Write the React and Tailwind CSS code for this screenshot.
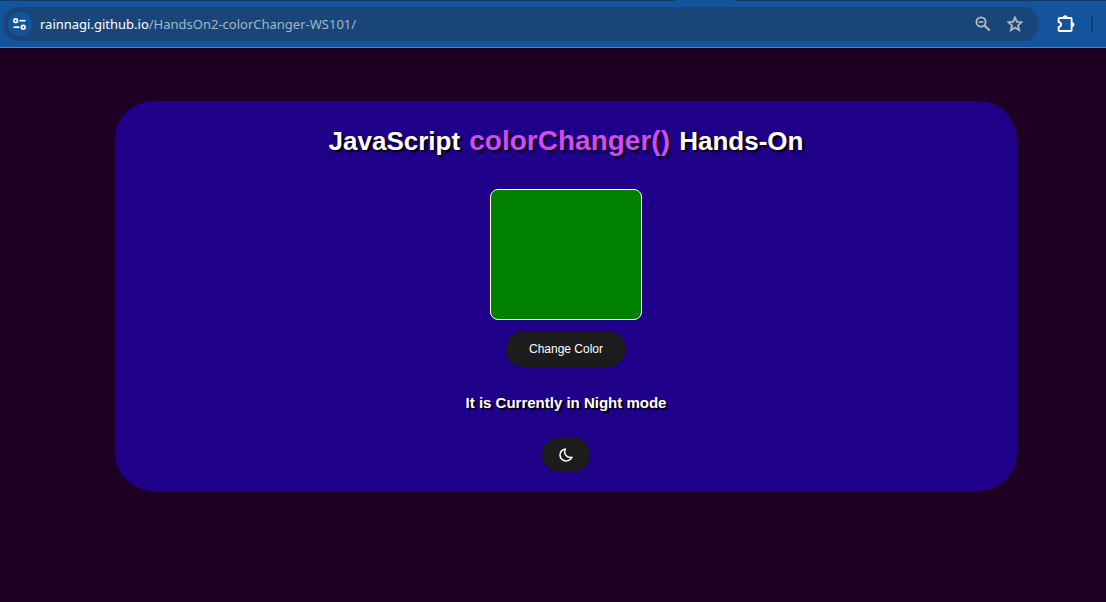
import { useState } from "react";

function TuneIcon() {
  return (
    <svg width="14" height="12" viewBox="0 0 14 12" fill="none" stroke="#fff" strokeWidth="1.7" aria-hidden="true">
      <circle cx="2.7" cy="2.7" r="1.8" />
      <path d="M6.5 2.7H12.5" />
      <circle cx="10.2" cy="9.2" r="1.8" />
      <path d="M0.5 9.2H6.5" />
    </svg>
  );
}

function ZoomOutIcon() {
  return (
    <svg width="16" height="16" viewBox="0 0 16 16" fill="none" stroke="#b5bcc4" strokeWidth="1.8" aria-hidden="true">
      <circle cx="6" cy="6" r="4.6" />
      <path d="M9.4 9.4L14.6 14.6" strokeWidth="2.1" />
      <path d="M3.8 6H8.2" strokeWidth="1.6" />
    </svg>
  );
}

function StarIcon() {
  return (
    <svg width="20" height="20" viewBox="0 0 24 24" fill="#b5bcc4" stroke="#b5bcc4" strokeWidth="0.6" aria-hidden="true">
      <path d="M21.5 9.24l-6.69-.62L12 2.2 9.19 8.63 2.5 9.24l4.96 4.73L5.82 21 12 17.27 18.18 21l-1.63-7.03L21.5 9.24zM12 15.4l-3.76 2.27 1-4.28-3.32-2.88 4.38-.38L12 6.1l1.71 4.04 4.38.38-3.32 2.88 1 4.28L12 15.4z" />
    </svg>
  );
}

function PuzzleIcon() {
  return (
    <svg width="18" height="18" viewBox="0 0 18 18" aria-hidden="true">
      <path
        d="M2.5 3H13.5Q14.6 3 14.6 4V15Q14.6 16 13.5 16H2.5Q1.6 16 1.6 15V12.2C4.9 11.6 4.9 7.6 1.6 7V4Q1.6 3 2.5 3Z"
        fill="none"
        stroke="#fff"
        strokeWidth="1.9"
        strokeLinejoin="round"
      />
      <path d="M5.6 3a2.5 2.8 0 0 1 5 0ZM14.6 7a2.8 2.5 0 0 1 0 5Z" fill="#fff" />
    </svg>
  );
}

function BrowserBar() {
  return (
    <header className="border-b border-[#4583bd] bg-[#14549c]">
      <div className="flex h-px bg-[#0f3a68]">
        <span className="ml-[61%] w-[60px] bg-[#14549c]" />
      </div>
      <div className="flex h-[46px] items-center pr-[13px] pl-[3px]">
        <div className="flex h-[34px] grow items-center rounded-full bg-[#194678] pr-3.5 pl-[5px]">
          <button type="button" aria-label="Site information" className="flex size-6 items-center justify-center rounded-full bg-[#14549c]">
            <TuneIcon />
          </button>
          <a
            href="https://rainnagi.github.io/HandsOn2-colorChanger-WS101/"
            className="ml-2 grow font-['Noto_Sans','Open_Sans',sans-serif] text-[13px] leading-5 text-[#a3b5c9]"
          >
            <span className="text-white">rainnagi.github.io</span>/HandsOn2-colorChanger-WS101/
          </a>
          <div className="flex items-center gap-3.5">
            <button type="button" aria-label="Zoom out">
              <ZoomOutIcon />
            </button>
            <button type="button" aria-label="Bookmark this page">
              <StarIcon />
            </button>
          </div>
        </div>
        <button type="button" aria-label="Extensions" className="ml-[18px]">
          <PuzzleIcon />
        </button>
        <span className="ml-4 h-4 w-0.5 bg-[#113c6e]" />
      </div>
    </header>
  );
}

const COLORS = ["#008000", "#ff0000", "#0000ff", "#ffff00"];

export default function App() {
  const [color, setColor] = useState(0);
  const [night, setNight] = useState(true);

  return (
    <div className={`min-h-screen font-['Liberation_Sans',Arial,sans-serif] ${night ? "bg-[#1d0022]" : "bg-[#f3e8ff]"}`}>
      <BrowserBar />
      <main className="pt-[53px] pr-[89px] pb-16 pl-[115px]">
        <section className="flex flex-col items-center rounded-[38px] bg-[#1f0088] pt-5 pb-[19px] text-white">
          <h1 className="text-[26px] leading-10 font-bold [text-shadow:2px_2px_2px_#000]">
            JavaScript <span className="px-0.5 text-[28px] text-[#d14af5]">colorChanger()</span> Hands-On
          </h1>
          <div
            className="mt-7 h-[131px] w-[152px] rounded-lg border border-white"
            style={{ backgroundColor: COLORS[color] }}
          />
          <button
            type="button"
            onClick={() => setColor((color + 1) % COLORS.length)}
            className="mt-[11px] h-9 rounded-full bg-[#1c1c1c] px-[23px] text-[12px] leading-4"
          >
            Change Color
          </button>
          <p className="mt-6 text-[15px] leading-6 font-bold [text-shadow:2px_2px_1px_#000]">
            It is Currently in {night ? "Night" : "Day"} mode
          </p>
          <button
            type="button"
            aria-label="Toggle night mode"
            onClick={() => setNight(!night)}
            className="mt-[22px] flex h-[35px] w-12 items-center justify-center rounded-full bg-[#1c1c1c]"
          >
            <svg width="14" height="14" viewBox="0 0 14 14" fill="none" stroke="#fff" strokeWidth="1.4" strokeLinejoin="round" aria-hidden="true">
              <path d="M6.5 1C4.3 4.8 6.8 10 13 9.3C11.3 12.5 7.2 14 4.2 12.2C-0.8 9.2 0.3 2 6.5 1Z" />
            </svg>
          </button>
        </section>
      </main>
    </div>
  );
}
